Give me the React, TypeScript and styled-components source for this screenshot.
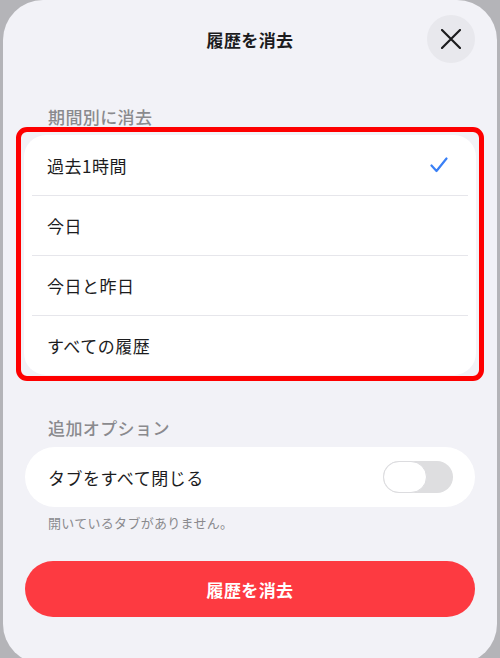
import React, { useState } from "react";
import styled, { createGlobalStyle } from "styled-components";

const GlobalStyle = createGlobalStyle`
  html, body {
    margin: 0;
    padding: 0;
    background: #b4b4b8;
    font-family: "Noto Sans CJK JP", "Noto Sans", sans-serif;
    -webkit-font-smoothing: antialiased;
  }
`;

const ranges = ["過去1時間", "今日", "今日と昨日", "すべての履歴"];

const App = () => {
  const [selected, setSelected] = useState(0);
  const [closeTabs, setCloseTabs] = useState(false);

  return (
    <>
      <GlobalStyle />
      <Sheet>
        <Header>
          <span />
          <Title>履歴を消去</Title>
          <CloseButton aria-label="閉じる">
            <svg width="20" height="20" viewBox="0 0 20 20">
              <path
                d="M1 1 L19 19 M19 1 L1 19"
                stroke="#1c1c1e"
                strokeWidth="2.2"
                strokeLinecap="round"
              />
            </svg>
          </CloseButton>
        </Header>

        <SectionLabel $top={44}>期間別に消去</SectionLabel>
        <Highlight>
          <Card>
            {ranges.map((label, i) => (
              <Row key={label} onClick={() => setSelected(i)}>
                <RowText>{label}</RowText>
                {selected === i && (
                  <svg width="18" height="16" viewBox="0 0 18 16">
                    <polyline
                      points="1.5,8.5 6.5,14 16.5,1.5"
                      fill="none"
                      stroke="#3a80f6"
                      strokeWidth="2.2"
                      strokeLinecap="round"
                      strokeLinejoin="round"
                    />
                  </svg>
                )}
              </Row>
            ))}
          </Card>
        </Highlight>

        <SectionLabel $top={37}>追加オプション</SectionLabel>
        <ToggleCard>
          <RowText>タブをすべて閉じる</RowText>
          <Track $on={closeTabs} onClick={() => setCloseTabs(!closeTabs)}>
            <Knob $on={closeTabs} />
          </Track>
        </ToggleCard>
        <Caption>開いているタブがありません。</Caption>

        <DangerButton>履歴を消去</DangerButton>
      </Sheet>
    </>
  );
};

const Sheet = styled.div`
  margin: 0 3px;
  height: 664px;
  background: #f2f2f7;
  border-radius: 40px;
  padding: 15px 22px 0;
  box-sizing: border-box;
  display: flex;
  flex-direction: column;
  overflow: hidden;
`;

const Header = styled.div`
  display: grid;
  grid-template-columns: 48px 1fr 48px;
  align-items: center;
  height: 48px;
`;

const Title = styled.h1`
  margin: 0;
  text-align: center;
  font-size: 17px;
  font-weight: 700;
  letter-spacing: 0.4px;
  color: #1c1c1e;
`;

const CloseButton = styled.button`
  width: 48px;
  height: 48px;
  border: none;
  border-radius: 50%;
  background: #e8e8ed;
  display: flex;
  align-items: center;
  justify-content: center;
  padding: 0;
  cursor: pointer;
`;

const SectionLabel = styled.div<{ $top: number }>`
  margin-top: ${(p) => p.$top}px;
  padding-left: 23px;
  font-size: 17px;
  line-height: 20px;
  font-weight: 500;
  letter-spacing: 0.4px;
  color: #8a8a8e;
`;

const Highlight = styled.div`
  margin: 0 -9px;
  border: 5px solid #fe0000;
  border-radius: 11px;
  padding: 3px 3px 1px;
`;

const Card = styled.div`
  background: #fff;
  border-radius: 22px;
  overflow: hidden;
`;

const Row = styled.div`
  box-sizing: border-box;
  height: 60px;
  margin: 0 8px;
  padding: 0 20px 0 15px;
  display: flex;
  align-items: center;
  justify-content: space-between;
  cursor: pointer;

  & + & {
    border-top: 1px solid #e6e6eb;
  }
`;

const RowText = styled.span`
  font-size: 17px;
  letter-spacing: 0.5px;
  color: #1c1c1e;
`;

const ToggleCard = styled.div`
  margin-top: 9px;
  height: 60px;
  background: #fff;
  border-radius: 30px;
  padding: 0 22px 0 23px;
  display: flex;
  align-items: center;
  justify-content: space-between;
`;

const Track = styled.div<{ $on: boolean }>`
  width: 70px;
  height: 32px;
  border-radius: 16px;
  background: ${(p) => (p.$on ? "#34c759" : "#dedee0")};
  position: relative;
  cursor: pointer;
`;

const Knob = styled.div<{ $on: boolean }>`
  position: absolute;
  top: 0;
  left: ${(p) => (p.$on ? "26px" : "0")};
  width: 44px;
  height: 32px;
  box-sizing: border-box;
  border-radius: 16px;
  background: #fff;
  border: 1.5px solid #dcdcdf;
`;

const Caption = styled.div`
  margin-top: 7px;
  padding-left: 23px;
  font-size: 13px;
  line-height: 18px;
  letter-spacing: 0.3px;
  color: #8a8a8e;
`;

const DangerButton = styled.button`
  margin-top: 29px;
  height: 56px;
  border: none;
  border-radius: 28px;
  background: #fd3a41;
  color: #fff;
  font-family: inherit;
  font-size: 17px;
  font-weight: 700;
  letter-spacing: 0.4px;
  cursor: pointer;
`;

export default App;
